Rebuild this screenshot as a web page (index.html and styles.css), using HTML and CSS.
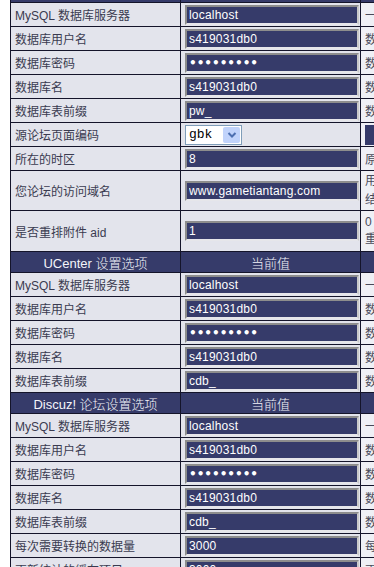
FILE: index.html
```html
<!DOCTYPE html>
<html lang="zh">
<head>
<meta charset="utf-8">
<title>设置选项</title>
<link rel="stylesheet" href="styles.css">
</head>
<body>
<table class="grid">
  <colgroup><col class="c1"><col class="c2"><col class="c3"></colgroup>
  <tr class="head"><td>源论坛设置选项</td><td>当前值</td><td></td></tr>
  <tr><td class="lbl">MySQL 数据库服务器</td><td class="val"><input class="field" value="localhost"></td><td class="note">一般为 localhost</td></tr>
  <tr><td class="lbl">数据库用户名</td><td class="val"><input class="field" value="s419031db0"></td><td class="note">数据库用户名</td></tr>
  <tr><td class="lbl">数据库密码</td><td class="val"><input class="field pass" type="password" value="123456789"></td><td class="note">数据库密码</td></tr>
  <tr><td class="lbl">数据库名</td><td class="val"><input class="field" value="s419031db0"></td><td class="note">数据库名</td></tr>
  <tr><td class="lbl">数据库表前缀</td><td class="val"><input class="field" value="pw_"></td><td class="note">数据库表前缀</td></tr>
  <tr><td class="lbl">源论坛页面编码</td><td class="val"><span class="select"><span class="sel-text">gbk</span><span class="sel-btn"><svg width="10" height="8" viewBox="0 0 10 8"><path d="M1.5 2 L5 5.5 L8.5 2" fill="none" stroke="#4d6fb0" stroke-width="2"/></svg></span></span></td><td class="note"><span class="navybox"></span></td></tr>
  <tr><td class="lbl">所在的时区</td><td class="val"><input class="field" value="8"></td><td class="note">原论坛所在时区</td></tr>
  <tr class="tall1"><td class="lbl">您论坛的访问域名</td><td class="val"><input class="field" value="www.gametiantang.com"></td><td class="note two">用户访问论坛的域名<br>结尾不要加斜杠</td></tr>
  <tr class="tall2"><td class="lbl">是否重排附件 aid</td><td class="val"><input class="field" value="1"></td><td class="note two alt">0 为不重排<br>重排附件</td></tr>
  <tr class="head"><td>UCenter 设置选项</td><td>当前值</td><td></td></tr>
  <tr><td class="lbl">MySQL 数据库服务器</td><td class="val"><input class="field" value="localhost"></td><td class="note">一般为 localhost</td></tr>
  <tr><td class="lbl">数据库用户名</td><td class="val"><input class="field" value="s419031db0"></td><td class="note">数据库用户名</td></tr>
  <tr><td class="lbl">数据库密码</td><td class="val"><input class="field pass" type="password" value="123456789"></td><td class="note">数据库密码</td></tr>
  <tr><td class="lbl">数据库名</td><td class="val"><input class="field" value="s419031db0"></td><td class="note">数据库名</td></tr>
  <tr><td class="lbl">数据库表前缀</td><td class="val"><input class="field" value="cdb_"></td><td class="note">数据库表前缀</td></tr>
  <tr class="head"><td>Discuz! 论坛设置选项</td><td>当前值</td><td></td></tr>
  <tr><td class="lbl">MySQL 数据库服务器</td><td class="val"><input class="field" value="localhost"></td><td class="note">一般为 localhost</td></tr>
  <tr><td class="lbl">数据库用户名</td><td class="val"><input class="field" value="s419031db0"></td><td class="note">数据库用户名</td></tr>
  <tr><td class="lbl">数据库密码</td><td class="val"><input class="field pass" type="password" value="123456789"></td><td class="note">数据库密码</td></tr>
  <tr><td class="lbl">数据库名</td><td class="val"><input class="field" value="s419031db0"></td><td class="note">数据库名</td></tr>
  <tr><td class="lbl">数据库表前缀</td><td class="val"><input class="field" value="cdb_"></td><td class="note">数据库表前缀</td></tr>
  <tr><td class="lbl">每次需要转换的数据量</td><td class="val"><input class="field" value="3000"></td><td class="note">每次转换数据量</td></tr>
  <tr><td class="lbl">更新统计的缓存项目</td><td class="val"><input class="field" value="3000"></td><td class="note">更新缓存项目</td></tr>
</table>
</body>
</html>
```

FILE: styles.css
```css
html, body {
  margin: 0;
  padding: 0;
  background: #ffffff;
  overflow: hidden;
}

.grid {
  margin: -19px 0 0 10px;
  table-layout: fixed;
  width: 552px;
  border-collapse: separate;
  border-spacing: 1px;
  background: #14142a;
  font-family: "Liberation Sans", "Noto Sans CJK SC", sans-serif;
  font-size: 12px;
}

.c1 { width: 169px; }
.c2 { width: 179px; }
.c3 { width: 200px; }

.grid td {
  height: 23px;
  padding: 0;
  vertical-align: middle;
  white-space: nowrap;
  overflow: hidden;
}

.grid .head td {
  height: 20px;
  background: #363b6a;
  color: #f4f4fa;
  text-align: center;
  font-size: 13px;
  font-weight: 300;
}

.grid .lbl {
  background: #e3e4ec;
  color: #3a3b50;
  padding: 0 4px;
}

.grid .val {
  background: #e3e4ec;
  padding: 0 1px 0 4px;
}

.grid .note {
  background: #eff0f5;
  color: #4a4a5a;
  padding: 0 4px;
}

.grid .tall1 td { height: 39px; }
.grid .tall2 td { height: 40px; }

.grid .two {
  line-height: 19px;
}
.grid .two.alt {
  line-height: 17px;
}

.field {
  box-sizing: border-box;
  display: block;
  width: 174px;
  height: 20px;
  margin: 0;
  padding: 0 2px;
  background: #363b6a;
  color: #ffffff;
  border: 2px solid;
  border-color: #8d8d8d #c9c9c9 #e6e6ea #8d8d8d;
  font-family: "Liberation Sans", sans-serif;
  font-size: 12px;
  letter-spacing: 0.2px;
  outline: none;
}

.field.pass {
  font-family: "DejaVu Sans", sans-serif;
  font-size: 12px;
  font-weight: bold;
  letter-spacing: 0;
}

.select {
  display: inline-flex;
  align-items: stretch;
  box-sizing: border-box;
  width: 57px;
  height: 20px;
  background: #ffffff;
  border: 1px solid #7f9db9;
  vertical-align: middle;
}

.sel-text {
  flex: 1;
  padding-left: 3px;
  font-family: "Liberation Mono", monospace;
  font-size: 13px;
  line-height: 18px;
  color: #000;
}

.sel-btn {
  width: 17px;
  margin: 1px;
  background: #c1d3fb;
  border-radius: 2px;
  display: flex;
  align-items: center;
  justify-content: center;
}

.navybox {
  display: block;
  height: 20px;
  width: 100px;
  background: #363b6a;
}
```
